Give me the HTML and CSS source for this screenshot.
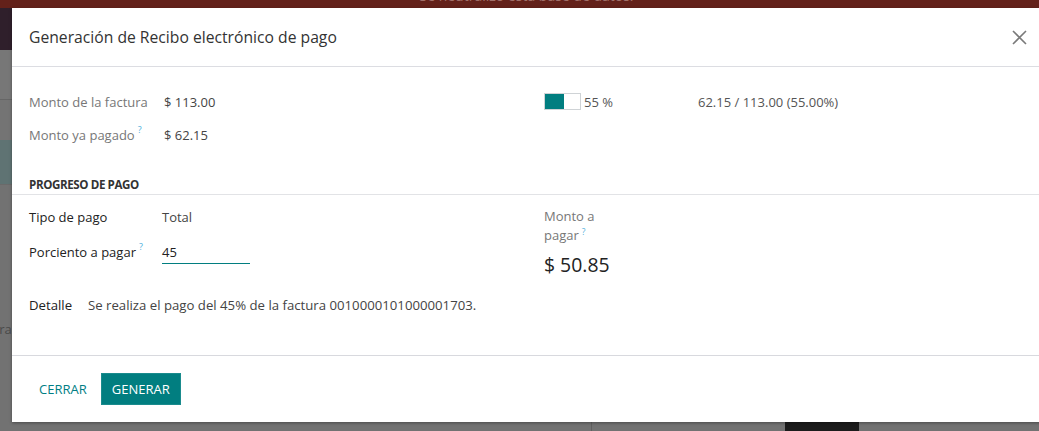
FILE: index.html
```html
<!DOCTYPE html>
<html lang="es">
<head>
<meta charset="utf-8">
<title>Generación de Recibo electrónico de pago</title>
<link rel="stylesheet" href="styles.css">
</head>
<body>
<div class="page">
  <div class="banner"><span>Se neutralizó esta base de datos.</span></div>
  <div class="navbar"></div>
  <div class="backdrop">
    <div class="bg-sliver">
      <div class="bg-a"></div>
      <div class="bg-b"></div>
      <div class="bg-c"></div>
      <div class="bg-d"></div>
      <div class="bg-text">ara</div>
    </div>
    <div class="bg-bottom">
      <div class="bg-line"></div>
      <div class="bg-dark"></div>
    </div>
  </div>
</div>

<div class="modal">
  <header class="modal-header">
    <h4 class="modal-title">Generación de Recibo electrónico de pago</h4>
    <button class="close" aria-label="Cerrar">
      <svg width="15" height="15" viewBox="0 0 15 15"><path d="M1 1 L14 14 M14 1 L1 14" stroke="#7a7a7a" stroke-width="1.6" fill="none"/></svg>
    </button>
  </header>

  <main class="modal-body">
    <div class="cols">
      <div class="col">
        <div class="row">
          <span class="lbl muted">Monto de la factura</span>
          <span class="val">$ 113.00</span>
        </div>
        <div class="row">
          <span class="lbl muted">Monto ya pagado<sup>?</sup></span>
          <span class="val">$ 62.15</span>
        </div>
      </div>
      <div class="col">
        <div class="row">
          <div class="progress"><div class="progress-fill" style="width:55%"></div></div>
          <span class="pct">55 %</span>
          <span class="ratio">62.15 / 113.00 (55.00%)</span>
        </div>
      </div>
    </div>

    <div class="separator"><span>PROGRESO DE PAGO</span></div>

    <div class="cols section2">
      <div class="col">
        <div class="row row2">
          <span class="lbl2">Tipo de pago</span>
          <span class="val2">Total</span>
        </div>
        <div class="row row2">
          <span class="lbl2">Porciento a pagar<sup>?</sup></span>
          <span class="input">45</span>
        </div>
      </div>
      <div class="col">
        <div class="amount">
          <div class="amount-lbl muted">Monto a<br>pagar<sup class="sup-low">?</sup></div>
          <div class="amount-val">$ 50.85</div>
        </div>
      </div>
    </div>

    <div class="detail">
      <span class="detail-lbl">Detalle</span>
      <span class="detail-val">Se realiza el pago del 45% de la factura 0010000101000001703.</span>
    </div>
  </main>

  <footer class="modal-footer">
    <button class="btn btn-link">CERRAR</button>
    <button class="btn btn-primary">GENERAR</button>
  </footer>
</div>
</body>
</html>
```

FILE: styles.css
```css
* { box-sizing: border-box; }
html, body { margin: 0; padding: 0; }
body {
  width: 1039px;
  height: 431px;
  overflow: hidden;
  background: #737373;
  font-family: "Open Sans", "Liberation Sans", sans-serif;
  position: relative;
}

/* background page (dimmed) */
.page { display: flex; flex-direction: column; height: 431px; }
.banner {
  height: 8px;
  background: #63211a;
  overflow: hidden;
  display: flex;
  justify-content: center;
  padding-left: 14px;
}
.banner span {
  font-size: 14px;
  line-height: 20px;
  margin-top: -14px;
  color: #a1706a;
}
.navbar { height: 42px; background: #2f1f2b; }
.backdrop { flex: 1; display: flex; flex-direction: column; background: #727272; }
.bg-sliver { flex: 1; width: 12px; display: flex; flex-direction: column; }
.bg-a { height: 50px; background: #777; border-bottom: 1px solid #666; }
.bg-b { height: 40px; background: #747474; }
.bg-c { height: 45px; background: #5f7373; border-bottom: 1px solid #6a6a6a; }
.bg-d { height: 135px; }
.bg-text { font-size: 13px; color: #4a4a4a; text-indent: -8px; white-space: nowrap; }
.bg-bottom { height: 9px; display: flex; }
.bg-line { width: 592px; border-right: 1px solid #606060; }
.bg-dark { width: 74px; margin-left: 193px; background: #1c1c1c; }

/* modal */
.modal {
  position: absolute;
  left: 12px;
  top: 8px;
  width: 1050px;
  height: 414px;
  background: #fff;
  box-shadow: 0 1px 3px rgba(0,0,0,.35);
  display: flex;
  flex-direction: column;
}
.modal-header {
  height: 59px;
  border-bottom: 1px solid #dcdde2;
  display: flex;
  align-items: center;
  padding: 0 17px;
}
.modal-title {
  margin: 0;
  flex: 1;
  font-size: 15.7px;
  font-weight: 400;
  color: #333;
}
.close {
  border: 0;
  background: none;
  padding: 0;
  margin-right: 18px;
  display: flex;
}

.modal-body { flex: 1; padding: 18px 17px 0; }
.cols { display: grid; grid-template-columns: 515px 1fr; }
.row { height: 33px; display: flex; align-items: center; font-size: 13px; }
.lbl { width: 135px; }
.muted { color: #777; }
.val { color: #444; }
sup {
  color: #4fb0dc;
  font-size: 9px;
  line-height: 0;
  vertical-align: top;
  position: relative;
  top: 4px;
  margin-left: 3px;
}
.sup-low { top: 6px; font-size: 8.5px; }
.progress {
  width: 37px;
  height: 17px;
  border: 1px solid #cfd3d6;
  background: #fff;
}
.progress-fill { height: 100%; background: #017e80; }
.pct { margin-left: 3px; color: #555; width: 114px; }
.ratio { color: #555; }

.separator {
  margin: 24px -17px 0;
  padding: 0 17px;
  border-bottom: 1px solid #e2e3e6;
  height: 20px;
  line-height: 20px;
  font-size: 11.6px;
  font-weight: 700;
  color: #333;
  letter-spacing: -0.4px;
}

.section2 { padding-top: 4px; }
.row2 { height: 35px; }
.lbl2 { width: 133px; color: #222; }
.val2 { color: #444; }
.input {
  width: 88px;
  height: 24px;
  line-height: 24px;
  border-bottom: 1px solid #017e80;
  color: #222;
  margin-top: 1px;
}
.amount { padding-top: 8px; }
.amount-lbl { width: 80px; font-size: 13px; line-height: 19px; }
.amount-val { font-size: 19.4px; line-height: 28px; margin-top: 6px; color: #222; }

.detail {
  margin-top: 11px;
  height: 30px;
  display: flex;
  align-items: center;
  font-size: 13.2px;
}
.detail-lbl { width: 59px; color: #222; }
.detail-val { color: #444; }

.modal-footer {
  height: 67px;
  border-top: 1px solid #d8d9de;
  display: flex;
  align-items: center;
  padding: 0 17px;
  gap: 4px;
  margin-top: auto;
}
.btn {
  height: 32px;
  border: 0;
  font-family: inherit;
  font-size: 13px;
  padding: 0 10px;
  cursor: pointer;
}
.btn-link { background: none; color: #017e84; }
.btn-primary { background: #017e80; color: #fff; width: 80px; padding: 0; border: 1px solid #1a8b8d; }
```
